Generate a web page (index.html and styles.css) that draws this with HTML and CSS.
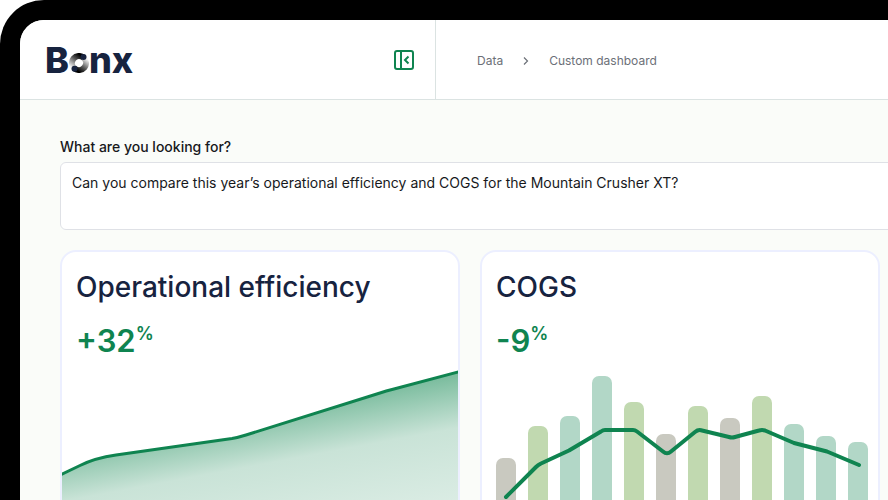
FILE: index.html
```html
<!DOCTYPE html>
<html lang="en">
<head>
<meta charset="utf-8">
<meta name="viewport" content="width=device-width, initial-scale=1">
<title>Bonx – Custom dashboard</title>
<link rel="stylesheet" href="styles.css">
</head>
<body>
<div class="frame">
  <div class="app">
    <header class="topbar">
      <div class="brand-bar">
        <a class="logo" href="#" aria-label="Bonx"><span>B</span><svg class="logo-ring" viewBox="0 0 20 20" aria-hidden="true">
            <defs>
              <linearGradient id="ringA" gradientUnits="userSpaceOnUse" x1="11" y1="2" x2="2" y2="14"><stop offset="0" stop-color="#000"/><stop offset="0.400" stop-color="#555"/><stop offset="1" stop-color="#f4f4f4"/></linearGradient>
              <linearGradient id="ringB" gradientUnits="userSpaceOnUse" x1="9" y1="18" x2="18" y2="6"><stop offset="0" stop-color="#000"/><stop offset="0.400" stop-color="#555"/><stop offset="1" stop-color="#f4f4f4"/></linearGradient>
            </defs>
            <g fill="none" stroke-width="6">
              <path d="M14.500 4.600A7 7 0 0 0 5.500 15.400" stroke="url(#ringA)"/>
              <path d="M5.500 15.400A7 7 0 0 0 14.500 4.600" stroke="url(#ringB)"/>
            </g>
            <circle cx="14.500" cy="4" r="3" fill="#17233f"/>
            <circle cx="5.500" cy="15.800" r="3" fill="#17233f"/>
          </svg><span>nx</span></a>
        <button class="collapse" type="button" aria-label="Collapse sidebar">
          <svg viewBox="0 0 20 20" width="20" height="20" fill="none" stroke="currentColor" stroke-width="2" aria-hidden="true">
            <rect x="1" y="1" width="18" height="18" rx="2"/>
            <path d="M7 1v18"/>
            <path d="M14.500 6.500L11 10l3.500 3.500"/>
          </svg>
        </button>
      </div>
      <nav class="crumbs" aria-label="Breadcrumb">
        <a href="#">Data</a>
        <svg viewBox="0 0 6 10" width="6" height="10" fill="none" stroke="currentColor" stroke-width="1.200" aria-hidden="true"><path d="M1 1.500L4.500 5L1 8.500"/></svg>
        <a href="#" aria-current="page">Custom dashboard</a>
      </nav>
    </header>
    <main class="content">
      <label class="prompt-label" for="prompt">What are you looking for?</label>
      <textarea class="prompt" id="prompt">Can you compare this year’s operational efficiency and COGS for the Mountain Crusher XT?</textarea>
      <div class="cards">
        <section class="card">
          <h2>Operational efficiency</h2>
          <p class="metric">+32<sup>%</sup></p>
          <svg class="chart" viewBox="0 0 396 180" role="img" aria-label="Operational efficiency rising">
            <defs>
              <linearGradient id="area" gradientUnits="userSpaceOnUse" x1="0" y1="89" x2="27" y2="234">
                <stop offset="0" stop-color="#7cbd9f"/>
                <stop offset="0.350" stop-color="#c9e3d7"/>
                <stop offset="1" stop-color="#e0efe8"/>
              </linearGradient>
            </defs>
            <path fill="url(#area)" d="M0 114L18 105.500Q33 98 54 95L170 78.500Q176 77.500 184 75L318 33Q324 31 331 29.200L396 12V180H0Z"/>
            <path fill="none" stroke="#0f8450" stroke-width="3" d="M-4 116L18 105.500Q33 98 54 95L170 78.500Q176 77.500 184 75L318 33Q324 31 331 29.200L400 11"/>
          </svg>
        </section>
        <section class="card">
          <h2>COGS</h2>
          <p class="metric">-9<sup>%</sup></p>
          <svg class="chart" viewBox="0 0 396 180" role="img" aria-label="Monthly COGS">
            <g fill="#c9c9c0">
              <rect x="14" y="98" width="20" height="90" rx="7"/>
              <rect x="174" y="74" width="20" height="120" rx="7"/>
              <rect x="238" y="58" width="20" height="130" rx="7"/>
            </g>
            <g fill="#c1d9b0">
              <rect x="46" y="66" width="20" height="130" rx="7"/>
              <rect x="142" y="42" width="20" height="150" rx="7"/>
              <rect x="206" y="46" width="20" height="150" rx="7"/>
              <rect x="270" y="36" width="20" height="160" rx="7"/>
            </g>
            <g fill="#b2d7c7">
              <rect x="78" y="56" width="20" height="140" rx="7"/>
              <rect x="110" y="16" width="20" height="180" rx="7"/>
              <rect x="302" y="64" width="20" height="130" rx="7"/>
              <rect x="334" y="76" width="20" height="120" rx="7"/>
              <rect x="366" y="82" width="20" height="110" rx="7"/>
            </g>
            <path fill="none" stroke="#0f8450" stroke-width="4" stroke-linecap="round" stroke-linejoin="round" d="M24 137L54 107Q56 105 59 103.500L87 90.500L119 71.500Q121 70 123 70H151Q153 70 155 71.500L181 91.500Q185 95 189 91.500L213 72Q216 69.500 219 70.200L247 77Q250 78 253 77L277 70.500Q280 69.500 283 70.500L312 83L345 91.500L377 105"/>
          </svg>
        </section>
      </div>
    </main>
  </div>
</div>
</body>
</html>
```
FILE: styles.css
```css
* { box-sizing: border-box; }

body {
  margin: 0;
  height: 100vh;
  overflow: hidden;
  background: #fff;
  color: #17191c;
  font-family: Inter, "Liberation Sans", sans-serif;
}

a { color: inherit; text-decoration: none; }

.frame {
  height: 100%;
  padding: 20px 0 0 20px;
  background: #000;
  border-radius: 44px 0 0 0;
}

.app {
  height: 100%;
  overflow: hidden;
  background: #fafcf9;
  border-radius: 24px 0 0 0;
}

.topbar {
  display: flex;
  height: 80px;
  background: #fff;
  border-bottom: 1px solid #dbe3e2;
}

.brand-bar {
  display: flex;
  align-items: center;
  justify-content: space-between;
  width: 416px;
  padding: 0 21px 0 25px;
  border-right: 1px solid #dbe3e2;
}

.logo {
  display: flex;
  align-items: baseline;
  color: #17233f;
  font-size: 36px;
  font-weight: 800;
  line-height: 40px;
}

.logo-ring { width: 20px; height: 20px; }

.collapse {
  display: flex;
  padding: 0;
  border: 0;
  background: none;
  color: #0f8450;
}

.crumbs {
  display: flex;
  align-items: center;
  gap: 20px;
  padding: 2px 0 0 41px;
  color: #6c7078;
  font-size: 12px;
  font-weight: 400;
}

.content { padding: 36px 8px 0 40px; }

.prompt-label {
  display: block;
  margin-bottom: 4px;
  font-size: 14px;
  font-weight: 500;
  line-height: 22px;
}

.prompt {
  display: block;
  width: calc(100% + 20px);
  height: 68px;
  padding: 10px 11px;
  border: 1px solid #dfe1e6;
  border-radius: 6px;
  background: #fff;
  color: inherit;
  font: 400 14px/20px Inter, "Liberation Sans", sans-serif;
  resize: none;
}

.cards {
  display: grid;
  grid-template-columns: 1fr 1fr;
  gap: 20px;
  margin-top: 20px;
}

.card {
  overflow: hidden;
  border: 2px solid #ecefff;
  border-radius: 16px;
  background: #fff;
}

.card h2 {
  margin: 18px 14px 0;
  color: #17233f;
  font-size: 28px;
  font-weight: 500;
  line-height: 34px;
}

.metric {
  display: flex;
  margin: 16px 14px 0;
  color: #0f8450;
  font-size: 31px;
  font-weight: 600;
  line-height: 42px;
  height: 40px;
}

.metric sup {
  font-size: 18px;
  font-weight: 600;
  line-height: 28px;
}

.chart { display: block; width: 100%; }
```
